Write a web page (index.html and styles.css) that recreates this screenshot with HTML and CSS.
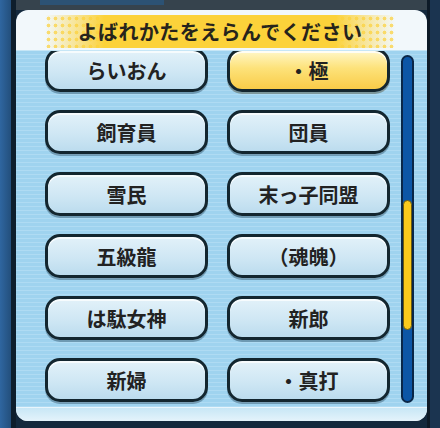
FILE: index.html
```html
<!DOCTYPE html>
<html>
<head>
    <title>よばれかた</title>
    <link rel="stylesheet" href="styles.css">
</head>
<body>
    <div class="screen">
        <div class="side-left"></div>
        <div class="middle">
            <div class="top-strip"><div class="top-tab"></div></div>
            <div class="panel">
                <div class="header">
                    <div class="banner">よばれかたをえらんでください</div>
                </div>
                <div class="list-area">
                    <div class="grid">
                        <div class="name-btn">らいおん</div>
                        <div class="name-btn selected">・極</div>
                        <div class="name-btn">飼育員</div>
                        <div class="name-btn">団員</div>
                        <div class="name-btn">雪民</div>
                        <div class="name-btn">末っ子同盟</div>
                        <div class="name-btn">五級龍</div>
                        <div class="name-btn">（魂魄）</div>
                        <div class="name-btn">は駄女神</div>
                        <div class="name-btn">新郎</div>
                        <div class="name-btn">新婦</div>
                        <div class="name-btn">・真打</div>
                    </div>
                    <div class="scroll-track">
                        <div class="scroll-thumb"></div>
                    </div>
                </div>
                <div class="footer-strip"></div>
            </div>
        </div>
        <div class="side-right"></div>
    </div>
</body>
</html>
```

FILE: styles.css
```css
body {
    margin: 0;
    background-color: #10253a;
    font-family: "Noto Sans CJK JP", "Noto Sans", sans-serif;
}

.screen {
    width: 440px;
    height: 428px;
    display: flex;
    background: #14293d;
    overflow: hidden;
}

.side-left {
    width: 11px;
    background: linear-gradient(to right, #2f66a0, #234f7c);
    border-right: 5px solid #0e1e2c;
}

.side-right {
    width: 10px;
    background: #1b3450;
    border-left: 3px solid #0d1a27;
}

.middle {
    flex: 1;
    display: flex;
    flex-direction: column;
}

.top-strip {
    height: 10px;
    background: #36434d;
}

.top-tab {
    width: 124px;
    height: 5px;
    margin-left: 24px;
    background: #2c5274;
}

.panel {
    flex: 1;
    margin-bottom: 7px;
    border-radius: 12px;
    background: #f2f8fb;
    display: flex;
    flex-direction: column;
    overflow: hidden;
}

.header {
    height: 40px;
    padding-top: 5px;
    box-sizing: border-box;
}

.banner {
    width: 350px;
    height: 33px;
    margin-left: 29px;
    display: flex;
    align-items: center;
    justify-content: center;
    font-size: 20px;
    font-weight: bold;
    color: #26241c;
    letter-spacing: 0.4px;
    background:
        linear-gradient(to right, rgba(252, 210, 58, 0) 0, #fcd23a 17%, #fcd23a 83%, rgba(252, 210, 58, 0) 100%),
        radial-gradient(circle, #f9dc72 1.6px, transparent 2.2px) 0 0 / 7px 7px;
}

.list-area {
    height: 357px;
    display: flex;
    overflow: hidden;
    background: repeating-linear-gradient(to bottom, #9fd3ef 0, #9fd3ef 3px, #afdbf3 3px, #afdbf3 4px);
    border-top: 1px solid #c6e6f6;
    box-sizing: border-box;
}

.grid {
    display: grid;
    grid-template-columns: 163px 163px;
    grid-auto-rows: 44px;
    column-gap: 19px;
    row-gap: 18px;
    padding-left: 29px;
    margin-top: -3px;
}

.name-btn {
    box-sizing: border-box;
    border: 3px solid #13262f;
    border-radius: 15px;
    background: linear-gradient(to bottom, #e2f1f9 0%, #cfe7f4 55%, #bcdcee 100%);
    box-shadow: inset 0 2px 0 rgba(255, 255, 255, 0.7), 0 2px 0 rgba(20, 50, 70, 0.35);
    display: flex;
    align-items: center;
    justify-content: center;
    font-size: 20px;
    font-weight: bold;
    color: #222;
}

.name-btn.selected {
    background: linear-gradient(to bottom, #fff7c8 0%, #fde27a 45%, #f9cc48 100%);
    box-shadow: inset 0 2px 0 rgba(255, 255, 255, 0.8), 0 2px 0 rgba(60, 40, 0, 0.35);
}

.scroll-track {
    width: 13px;
    height: 348px;
    margin-left: 11px;
    margin-top: 4px;
    box-sizing: border-box;
    border: 2px solid #0a2748;
    border-radius: 7px;
    background: #0c56a6;
    padding-top: 143px;
}

.scroll-thumb {
    height: 130px;
    border-radius: 5px;
    background: #f9c91c;
    border: 1px solid #6b5a10;
    box-sizing: border-box;
}

.footer-strip {
    flex: 1;
    background: linear-gradient(to bottom, #c8e7f6, #e4f3fb);
    border-top: 1px solid #e8f5fc;
}
```
